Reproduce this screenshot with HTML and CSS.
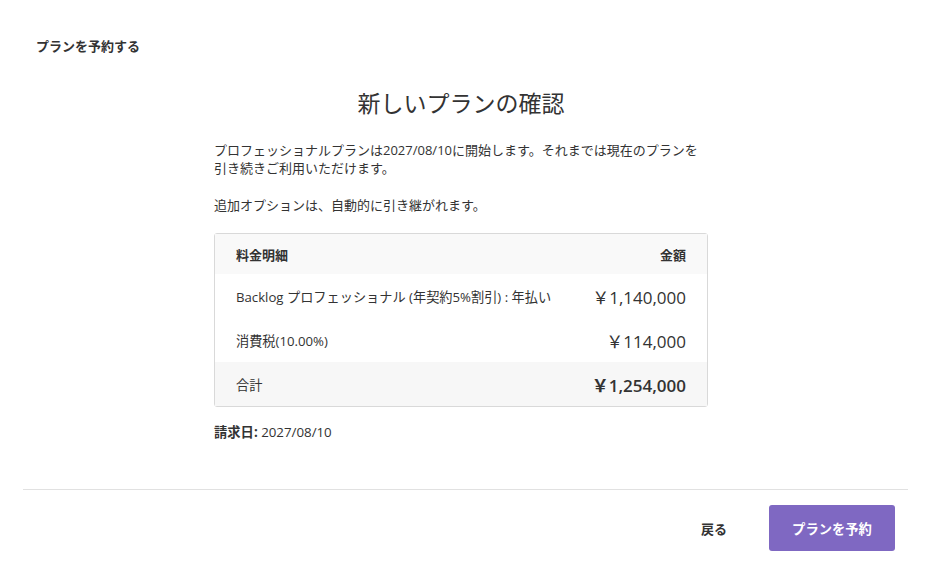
FILE: index.html
```html
<!DOCTYPE html>
<html lang="ja">
<head>
    <meta charset="UTF-8">
    <title>プランを予約する</title>
    <link rel="stylesheet" href="styles.css">
</head>
<body>
    <div class="modal">
        <div class="modal-header">プランを予約する</div>

        <div class="modal-body">
            <h1 class="title">新しいプランの確認</h1>
            <p class="lead">プロフェッショナルプランは2027/08/10に開始します。それまでは現在のプランを引き続きご利用いただけます。</p>
            <p class="lead">追加オプションは、自動的に引き継がれます。</p>

            <div class="detail">
                <div class="row head">
                    <span>料金明細</span>
                    <span>金額</span>
                </div>
                <div class="row">
                    <span class="label">Backlog プロフェッショナル (年契約5%割引) : 年払い</span>
                    <span class="price">￥1,140,000</span>
                </div>
                <div class="row">
                    <span class="label">消費税(10.00%)</span>
                    <span class="price">￥114,000</span>
                </div>
                <div class="row total">
                    <span class="label">合計</span>
                    <span class="price">￥1,254,000</span>
                </div>
            </div>

            <p class="billing"><b>請求日:</b> 2027/08/10</p>
        </div>

        <div class="modal-footer">
            <button class="btn-back">戻る</button>
            <button class="btn-primary">プランを予約</button>
        </div>
    </div>
</body>
</html>
```

FILE: styles.css
```css
body {
    margin: 0;
    font-family: "Open Sans", "Noto Sans CJK JP", sans-serif;
    color: #333;
    background: #fff;
}
.modal {
    padding: 0 23px;
}
.modal-header {
    padding: 37px 13px 0;
    font-size: 13px;
    font-weight: bold;
    line-height: 18px;
}
.modal-body {
    width: 494px;
    margin-left: 191px;
    padding-bottom: 48px;
}
.title {
    margin: 32px 0 22px;
    font-size: 23px;
    font-weight: normal;
    text-align: center;
    line-height: 32px;
}
.lead {
    margin: 0 0 19px;
    font-size: 13px;
    line-height: 18px;
}
.detail {
    border: 1px solid #d9d9d9;
    border-radius: 3px;
    margin-top: 1px;
}
.row {
    display: flex;
    justify-content: space-between;
    align-items: center;
    height: 44px;
    padding: 0 21px;
    font-size: 13.2px;
}
.row.head {
    height: 40px;
    background: #f9f9f9;
    font-size: 13px;
    font-weight: bold;
}
.row.total {
    height: 44px;
    background: #f7f7f7;
}
.price {
    font-size: 17px;
}
.total .price {
    font-weight: 600;
}
.billing {
    margin: 16px 0 0;
    font-size: 13.3px;
    line-height: 18px;
}
.modal-footer {
    border-top: 1px solid #e1e1e1;
    display: flex;
    justify-content: flex-end;
    align-items: center;
    padding: 15px 13px 0 0;
}
.btn-back {
    border: none;
    background: none;
    font-family: inherit;
    font-size: 13px;
    font-weight: bold;
    color: #333;
    padding: 0 22px;
    margin-right: 20px;
    cursor: pointer;
}
.btn-primary {
    border: none;
    border-radius: 3px;
    background: #7f68c2;
    color: #fff;
    font-family: inherit;
    font-size: 13.3px;
    font-weight: bold;
    width: 126px;
    height: 46px;
    cursor: pointer;
}
```
